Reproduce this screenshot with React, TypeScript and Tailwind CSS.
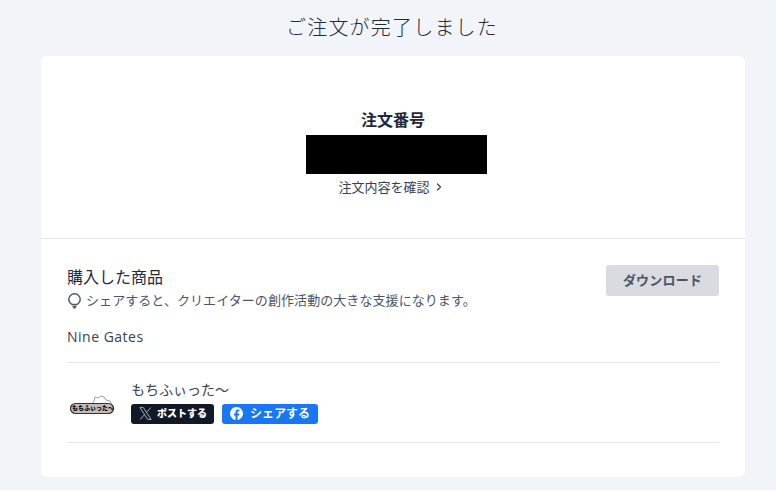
import { ChevronRight } from 'lucide-react';

const fontStack = "font-['Open_Sans','Noto_Sans_CJK_JP',sans-serif]";

function ShopLogo() {
  return (
    <div className="relative w-[44px] h-[20px]">
      <svg width="44" height="20" viewBox="0 0 44 20" className="absolute left-0 top-0">
        <path d="M22 9 l2-3 l1-4 l3 1 l3-2 l3 1 l2 3 l4 1 l2 4 Z" fill="#fff" stroke="#777" strokeWidth="0.7" />
        <rect x="0.5" y="8.5" width="43" height="10" rx="5" fill="#bdbdbd" stroke="#333" strokeWidth="1.2" />
      </svg>
      <span className="absolute left-[2px] top-[8px] text-[6px] leading-[11px] font-black text-black whitespace-nowrap">
        もちふぃった〜
      </span>
    </div>
  );
}

export default function App() {
  return (
    <div className={`w-[776px] h-[490px] overflow-hidden bg-[#f1f5f9] text-[#1f2937] ${fontStack}`}>
      <h1 className="h-[56px] pt-[12px] pl-[8px] text-center text-[20px] leading-[32px] tracking-[1.2px] font-light text-[#1f2937]">
        ご注文が完了しました
      </h1>

      <div className="ml-[41px] w-[704px] h-[421px] bg-white rounded-md">
        <div className="h-[183px] pt-[54px] flex flex-col items-center border-b border-[#e5e7eb]">
          <p className="text-[16px] leading-[21px] font-bold text-[#1f2937]">注文番号</p>
          <div className="mt-[4px] ml-[7px] w-[181px] h-[39px] bg-black" />
          <a className="mt-[3px] mr-[3px] flex items-center text-[13px] leading-[20px] text-[#374151]">
            注文内容を確認
            <ChevronRight size={12} strokeWidth={2.5} className="ml-[3px]" />
          </a>
        </div>

        <div className="px-[26px]">
          <div className="flex justify-between pt-[26px]">
            <div>
              <h2 className="text-[16px] leading-[24px] mb-[2px] text-[#1f2937]">購入した商品</h2>
              <p className="flex items-center text-[13px] leading-[18px] tracking-[0.07px] text-[#4b5563]">
                <svg width="15" height="16" viewBox="0 0 15 16" fill="none" stroke="#4b5563" strokeWidth="1.4" className="mr-[4px] mt-[2px]">
                  <path d="M5 11.5 C3.5 10.5 1.8 9 1.8 6.5 a5.7 5.7 0 0 1 11.4 0 C13.2 9 11.5 10.5 10 11.5 Z" />
                  <path d="M5.5 13.5 h4 M6.5 15 h2" />
                </svg>
                シェアすると、クリエイターの創作活動の大きな支援になります。
              </p>
            </div>
            <button className="w-[113px] h-[31px] rounded-[3px] bg-[#d9dbe0] text-[13px] tracking-[0.2px] font-bold text-[#4b5563]">
              ダウンロード
            </button>
          </div>

          <p className="mt-[18px] text-[14px] tracking-[0.5px] leading-[20px] text-[#374151]">Nine Gates</p>

          <div className="mt-[15px] h-[81px] border-y border-[#e5e7eb] flex items-center">
            <div className="w-[64px] pl-[3px] pt-[4px]">
              <ShopLogo />
            </div>
            <div className="pb-[2px]">
              <p className="text-[14px] leading-[20px] text-[#374151]">もちふぃった〜</p>
              <div className="mt-[4px] flex gap-[8px]">
                <a className="w-[83px] h-[20px] rounded-[3px] bg-[#111827] flex items-center justify-center text-white text-[10px] font-black">
                  <svg width="15" height="15" viewBox="0 0 24 24" fill="none" stroke="#c9ccd1" strokeWidth="1.3" className="mr-[4px]">
                    <path d="M3 2.5 h5.5 L21 21.5 h-5.5 Z" />
                    <path d="M20.5 2.5 L13.2 10.6 M10.6 13.4 L3.5 21.5" />
                  </svg>
                  ポストする
                </a>
                <a className="w-[96px] h-[20px] rounded-[3px] bg-[#1877f2] flex items-center justify-center text-white text-[12px] font-bold">
                  <svg width="13" height="13" viewBox="0 0 24 24" fill="currentColor" className="mr-[7px]">
                    <path d="M24 12.07C24 5.4 18.63 0 12 0S0 5.4 0 12.07c0 6.03 4.39 11.02 10.13 11.93v-8.44H7.08v-3.49h3.05V9.41c0-3.03 1.79-4.7 4.53-4.7 1.31 0 2.68.24 2.68.24v2.97h-1.51c-1.49 0-1.96.93-1.96 1.89v2.26h3.33l-.53 3.49h-2.8V24C19.61 23.09 24 18.1 24 12.07z" />
                  </svg>
                  シェアする
                </a>
              </div>
            </div>
          </div>
        </div>
      </div>
    </div>
  );
}
